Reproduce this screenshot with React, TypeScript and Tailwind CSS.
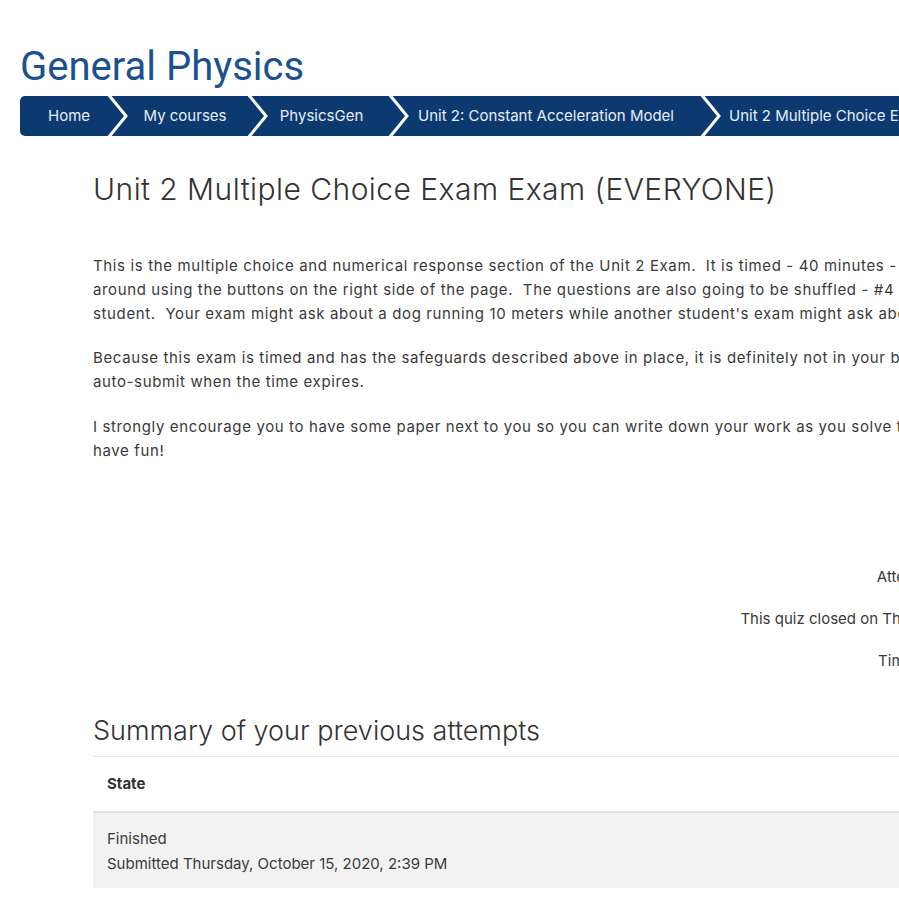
const crumbs = [
  { label: "Home", cls: "w-[88px] pl-[10px]" },
  { label: "My courses", cls: "w-[120px] pr-[6px]" },
  { label: "PhysicsGen", cls: "w-[121px] pr-[14px]" },
  { label: "Unit 2: Constant Acceleration Model", cls: "w-[292px] pr-[18px]" },
  { label: "Unit 2 Multiple Choice Exam Exam (EVERYONE)", cls: "pl-[8px] pr-[24px]" },
];

const intro = [
  [
    "This is the multiple choice and numerical response section of the Unit 2 Exam.  It is timed - 40 minutes - and you will be able to move",
    "around using the buttons on the right side of the page.  The questions are also going to be shuffled - #4 for you might be #9 for another",
    "student.  Your exam might ask about a dog running 10 meters while another student's exam might ask about a cat running 12 meters.",
  ],
  [
    "Because this exam is timed and has the safeguards described above in place, it is definitely not in your best interest to wait until the last minute.  The exam will",
    "auto-submit when the time expires.",
  ],
  [
    "I strongly encourage you to have some paper next to you so you can write down your work as you solve the problems.  Good luck and",
    "have fun!",
  ],
];

const Chevron = () => (
  <svg width="20" height="40" viewBox="0 0 20 40" className="shrink-0 overflow-visible">
    <polyline points="0,-2 18,20 0,42" fill="none" stroke="#ffffff" strokeWidth="3" />
  </svg>
);

export default function App() {
  return (
    <div className="w-full overflow-hidden bg-white min-h-[900px] font-['Inter',sans-serif]">
      <div className="w-[1800px] pt-[43px] pl-[20px]">
        <h1 className="text-[40px] leading-[48px] text-[#1c5190] font-['Roboto',sans-serif] font-normal">General Physics</h1>

        <nav className="mt-[5px] flex h-[40px] items-center rounded-l-[5px] bg-[#0c3a70] text-[15px] text-[#e9eef5]">
          {crumbs.map((c, i) => (
            <div key={i} className="flex h-full items-center">
              <div className={"flex h-full shrink-0 items-center justify-center whitespace-nowrap " + c.cls}>
                {c.label}
              </div>
              {i < crumbs.length - 1 && <Chevron />}
            </div>
          ))}
          <div className="flex-1" />
        </nav>

        <main className="ml-[73px] w-[1704px] text-[#3a3a3a]">
          <h2 className="mt-[35px] text-[30px] leading-[36px] tracking-[0.45px] text-[#333] font-light">
            Unit 2 Multiple Choice Exam Exam (EVERYONE)
          </h2>

          <div className="mt-[47px] text-[15px] leading-[24px] tracking-[0.63px]">
            {intro.map((para, i) => (
              <p key={i} className={i === 0 ? "" : i === 1 ? "mt-[20px]" : "mt-[21px]"}>
                {para.map((line, j) => (
                  <span key={j} className="block whitespace-pre">
                    {line}
                  </span>
                ))}
              </p>
            ))}
          </div>

          <div className="mt-[102px] text-center text-[15px] leading-[24px]">
            <p>Attempts allowed: 1</p>
            <p className="mt-[18px]">This quiz closed on Thursday, October 15, 2020, 11:59 PM</p>
            <p className="mt-[18px]">Time limit: 40 mins</p>
          </div>

          <h3 className="mt-[42px] text-[27px] leading-[32px] text-[#333] font-light">
            Summary of your previous attempts
          </h3>

          <table className="mt-[9px] w-full border-t border-[#e6e6e6] text-[15px]">
            <thead>
              <tr className="border-b-2 border-[#dee2e6] leading-[24px]">
                <th className="px-[14px] py-[15px] text-left font-bold text-[#333]">State</th>
                <th className="px-[14px] py-[15px] text-center font-bold text-[#333]">Marks / 25.00</th>
                <th className="px-[14px] py-[15px] text-center font-bold text-[#333]">Grade / 100.00</th>
                <th className="px-[14px] py-[15px] text-center font-bold text-[#333]">Review</th>
              </tr>
            </thead>
            <tbody>
              <tr className="bg-[#f2f2f2] leading-[25px]">
                <td className="px-[14px] pt-[13px] pb-[12px] text-left">
                  <div>Finished</div>
                  <div>Submitted Thursday, October 15, 2020, 2:39 PM</div>
                </td>
                <td className="px-[14px] text-center"></td>
                <td className="px-[14px] text-center"></td>
                <td className="px-[14px] text-center"></td>
              </tr>
            </tbody>
          </table>
        </main>
      </div>
    </div>
  );
}
